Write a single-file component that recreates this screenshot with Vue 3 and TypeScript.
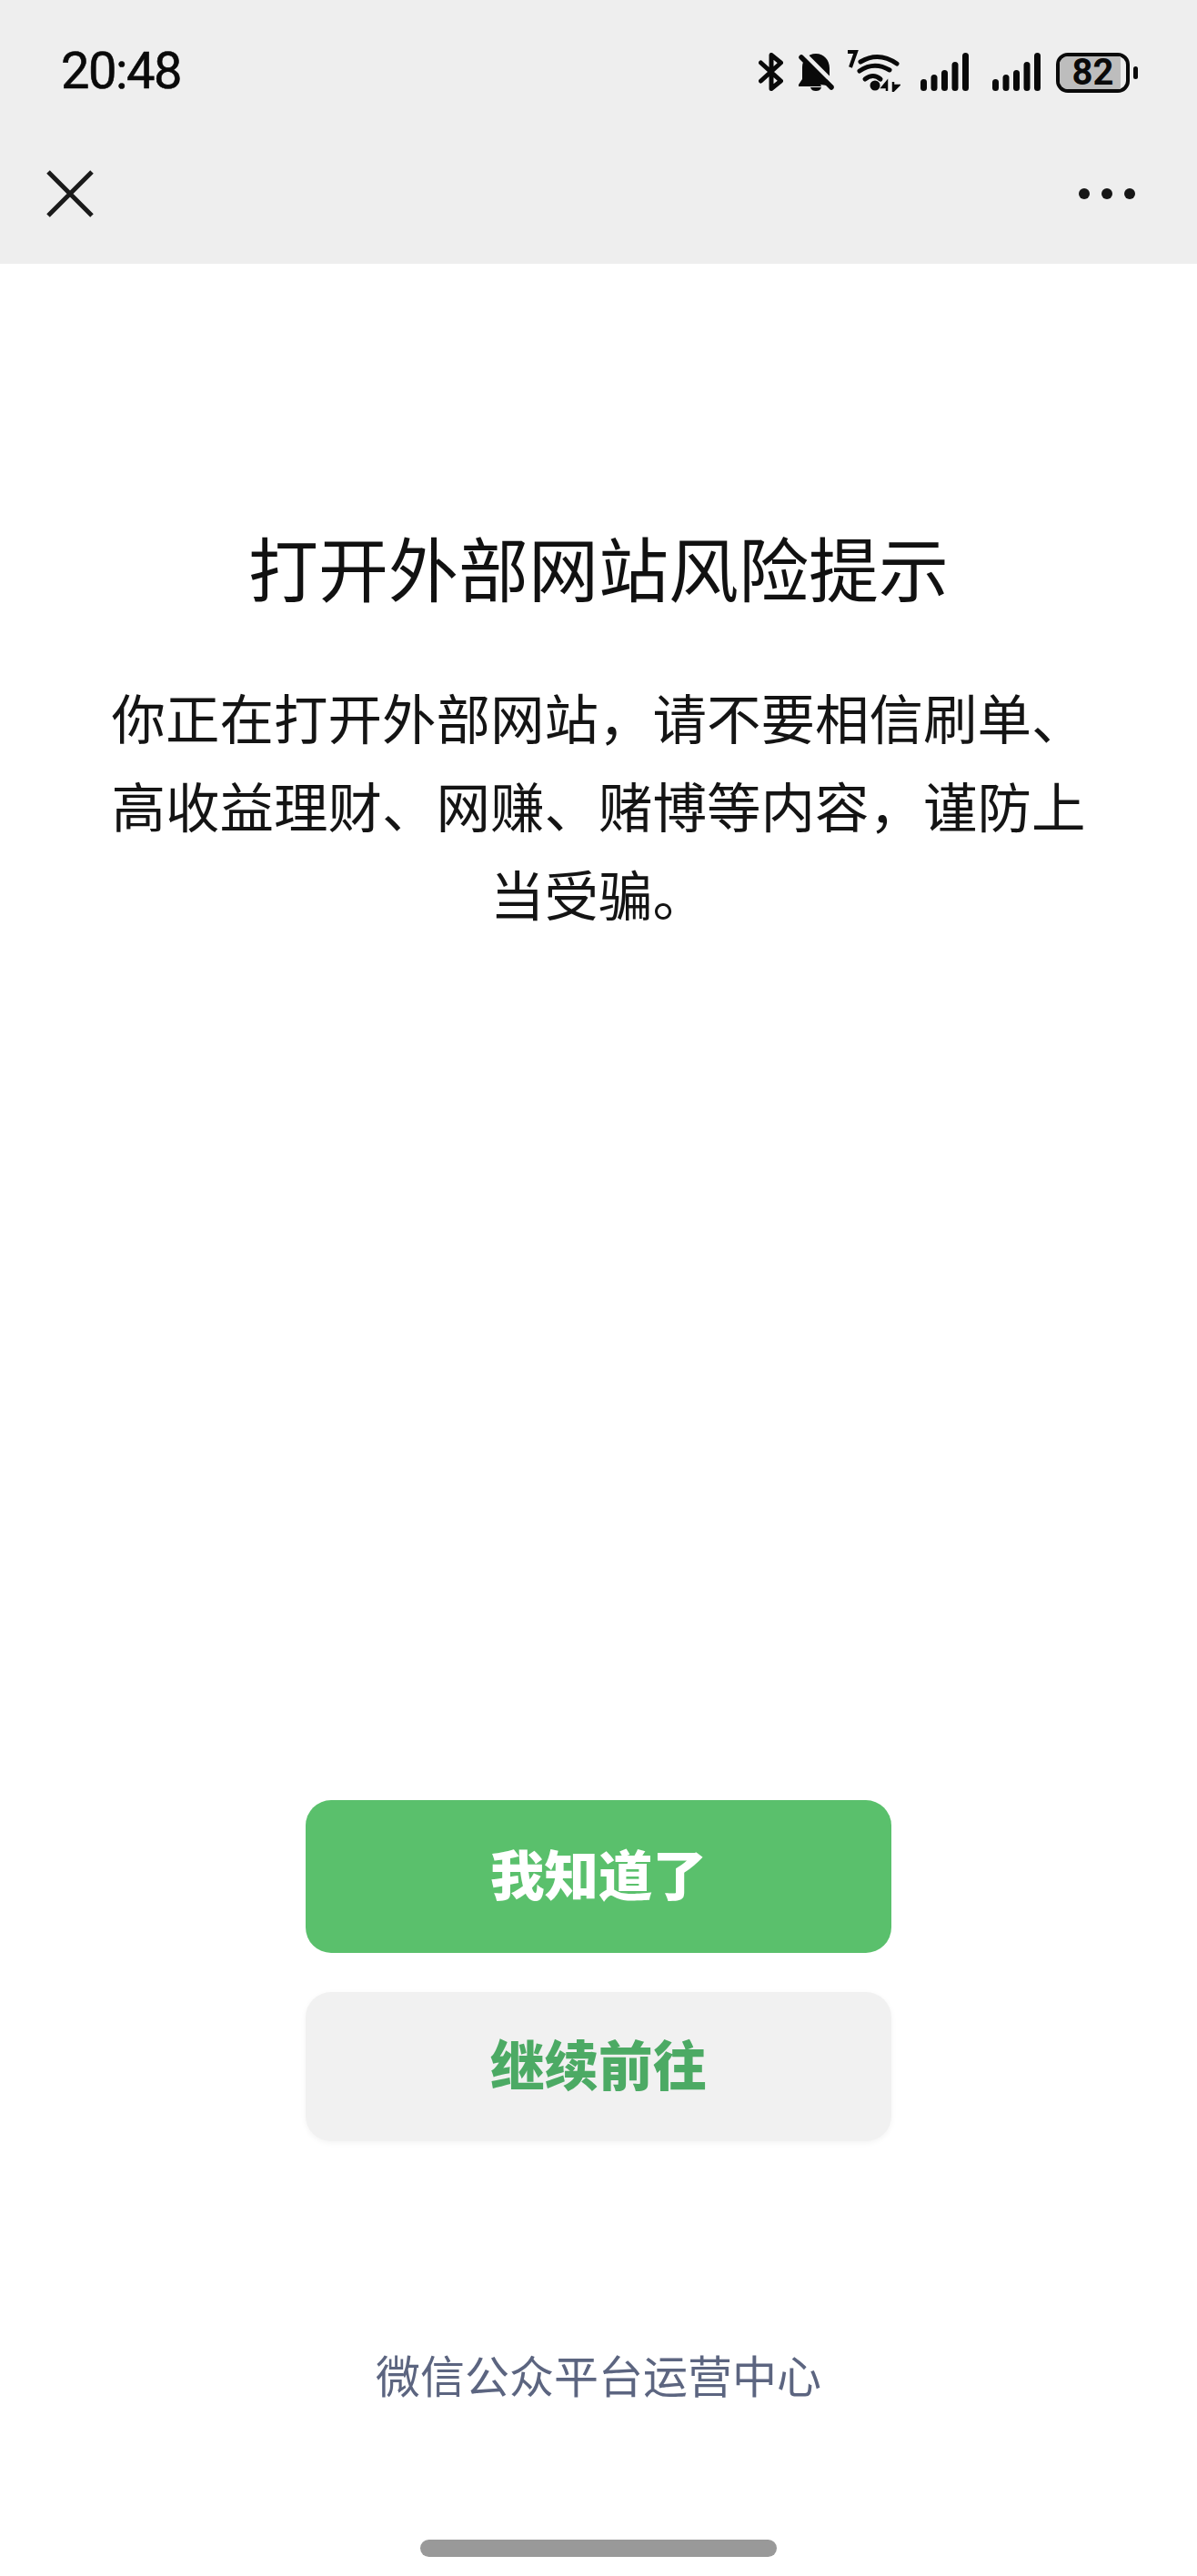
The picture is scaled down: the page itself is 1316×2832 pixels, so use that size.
<script setup lang="ts">
const signals = [0, 1];
const bars = [
  { x: 3.5, top: 32.5 },
  { x: 15, top: 27.5 },
  { x: 26.5, top: 22.5 },
  { x: 38, top: 13.5 },
  { x: 49.5, top: 3.5 },
];
</script>

<template>
  <div class="page">
    <header class="top">
      <div class="status">
        <span class="time">20:48</span>
        <div class="status-icons">
          <svg class="ic-bt" width="27" height="42" viewBox="0 0 27 42" fill="none" stroke="#0a0a0a" stroke-width="5">
            <path d="M2.500 31 L24.500 11 L14 2.500 V39.500 L24.500 31 L2.500 11" stroke-linejoin="round" stroke-linecap="round" />
          </svg>
          <svg class="ic-bell" width="39" height="42" viewBox="0 0 39 42">
            <path d="M19 1c9 0 15 7 15 16v10l5 8v2H0v-2l4-6V16C4 8 10 1 19 1z" fill="#0a0a0a" />
            <path d="M13 38h12c-1 3-3 4-6 4s-5-1-6-4z" fill="#0a0a0a" />
            <path d="M6 1 L42 37" stroke="#eeeeee" stroke-width="5" />
            <path d="M3 5 L36 38" stroke="#0a0a0a" stroke-width="5.500" stroke-linecap="round" />
            <path d="M24 35 L39 37 L39 42 L28 42 Z" fill="#eeeeee" />
            <path d="M30 32 L36 38" stroke="#0a0a0a" stroke-width="5.500" stroke-linecap="round" />
          </svg>
          <svg class="ic-wifi" width="60" height="48" viewBox="0 0 60 48" fill="none" stroke="#0a0a0a">
            <path d="M2 4h9l-6 17" stroke-width="4" />
            <path d="M16 15 Q36 3 56 17" stroke-width="5" stroke-linecap="round" />
            <path d="M15 25 Q31 14 48 24" stroke-width="5" stroke-linecap="round" />
            <path d="M21 34 Q30 27 38 34" stroke-width="5" stroke-linecap="round" />
            <circle cx="32" cy="41" r="5.500" fill="#0a0a0a" stroke="none" />
            <path d="M45 47V37L40 43h5z" fill="#0a0a0a" stroke-width="2.500" />
            <path d="M52 37V47L58 41h-6z" fill="#0a0a0a" stroke-width="2.500" />
          </svg>
          <svg v-for="s in signals" :key="s" class="ic-signal" width="54" height="42" viewBox="0 0 54 42" stroke="#0a0a0a" stroke-width="7" stroke-linecap="round">
            <line v-for="(b, i) in bars" :key="i" :x1="b.x" :y1="b.top" :x2="b.x" y2="38.5" />
          </svg>
          <div class="battery">
            <div class="battery-body">
              <div class="battery-level"></div>
              <span class="battery-num">82</span>
            </div>
            <div class="battery-nub"></div>
          </div>
        </div>
      </div>
      <div class="nav">
        <svg width="52" height="52" viewBox="0 0 52 52" stroke="#1a1a1a" stroke-width="5">
          <path d="M2 2 L50 50 M50 2 L2 50" />
        </svg>
        <div class="dots">
          <i></i><i></i><i></i>
        </div>
      </div>
    </header>

    <main class="content">
      <h1 class="title">打开外部网站风险提示</h1>
      <p class="desc">你正在打开外部网站，请不要相信刷单、高收益理财、网赚、赌博等内容，谨防上当受骗。</p>
    </main>

    <div class="actions">
      <button class="btn btn-primary"><span>我知道了</span></button>
      <button class="btn btn-default"><span>继续前往</span></button>
    </div>

    <footer class="foot">微信公众平台运营中心</footer>
    <div class="home-bar"></div>
  </div>
</template>

<style scoped>
.page {
  height: 2832px;
  display: flex;
  flex-direction: column;
  align-items: center;
  background: #ffffff;
  font-family: "Noto Sans CJK SC", "Noto Sans", sans-serif;
  overflow: hidden;
}

.top {
  width: 100%;
  height: 290px;
  background: #eeeeee;
  box-sizing: border-box;
}

.status {
  height: 187px;
  box-sizing: border-box;
  padding: 46px 65px 0 67px;
  display: flex;
  justify-content: space-between;
  align-items: flex-start;
}

.time {
  font-family: Roboto, sans-serif;
  font-size: 56px;
  line-height: 64px;
  font-weight: 400;
  letter-spacing: -1.5px;
  color: #0a0a0a;
  -webkit-text-stroke: 0.6px #0a0a0a;
}

.status-icons {
  display: flex;
  align-items: flex-start;
  margin-top: 7px;
}

.ic-bt {
  margin-top: 5px;
}

.ic-bell {
  margin-left: 17px;
  margin-top: 5px;
}

.ic-wifi {
  margin-left: 13px;
}

.ic-signal {
  margin-left: 22px;
  margin-top: 5px;
}

.ic-signal + .ic-signal {
  margin-left: 25px;
}

.battery {
  display: flex;
  align-items: center;
  margin-left: 16px;
  margin-top: 5px;
}

.battery-body {
  position: relative;
  width: 81px;
  height: 44px;
  box-sizing: border-box;
  border: 4px solid #0a0a0a;
  border-radius: 13px;
  display: flex;
  align-items: center;
  justify-content: center;
}

.battery-level {
  position: absolute;
  left: 0;
  top: 0;
  bottom: 0;
  width: 92%;
  border-radius: 9px 0 0 9px;
  background: #bdbdbd;
}

.battery-num {
  position: relative;
  font-family: Roboto, sans-serif;
  font-size: 40px;
  line-height: 36px;
  font-weight: 700;
  color: #0a0a0a;
}

.battery-nub {
  width: 5px;
  height: 14px;
  margin-left: 4px;
  border-radius: 3px;
  background: #0a0a0a;
}

.nav {
  display: flex;
  justify-content: space-between;
  align-items: center;
  padding: 0 68px 0 51px;
}

.dots {
  display: flex;
  gap: 13px;
}

.dots i {
  display: block;
  width: 12px;
  height: 12px;
  border-radius: 50%;
  background: #161616;
}

.content {
  flex: 1;
  width: 100%;
  box-sizing: border-box;
  padding: 283px 120px 0;
  text-align: center;
  color: #111111;
}

.title {
  margin: 0;
  font-size: 77px;
  line-height: 100px;
  font-weight: 400;
}

.desc {
  margin: 66px 0 0;
  font-size: 59.5px;
  line-height: 97px;
  font-weight: 400;
  color: #141414;
}

.actions {
  display: flex;
  flex-direction: column;
  gap: 43px;
}

.btn {
  display: flex;
  align-items: center;
  justify-content: center;
  width: 644px;
  border: none;
  border-radius: 28px;
  padding: 0 0 10px;
  font-family: inherit;
  font-size: 59.5px;
  font-weight: 900;
}

.btn-primary {
  height: 168px;
  background: #5ac06c;
  color: #ffffff;
}

.btn-default {
  height: 164px;
  background: #f1f1f1;
  color: #4caa64;
  box-shadow: 0 2px 6px rgba(0, 0, 0, 0.05);
}

.foot {
  margin-top: 218px;
  font-size: 49px;
  line-height: 76px;
  color: #5c6580;
}

.home-bar {
  width: 392px;
  height: 19px;
  margin: 144px 0 21px;
  border-radius: 10px;
  background: #999999;
}
</style>
